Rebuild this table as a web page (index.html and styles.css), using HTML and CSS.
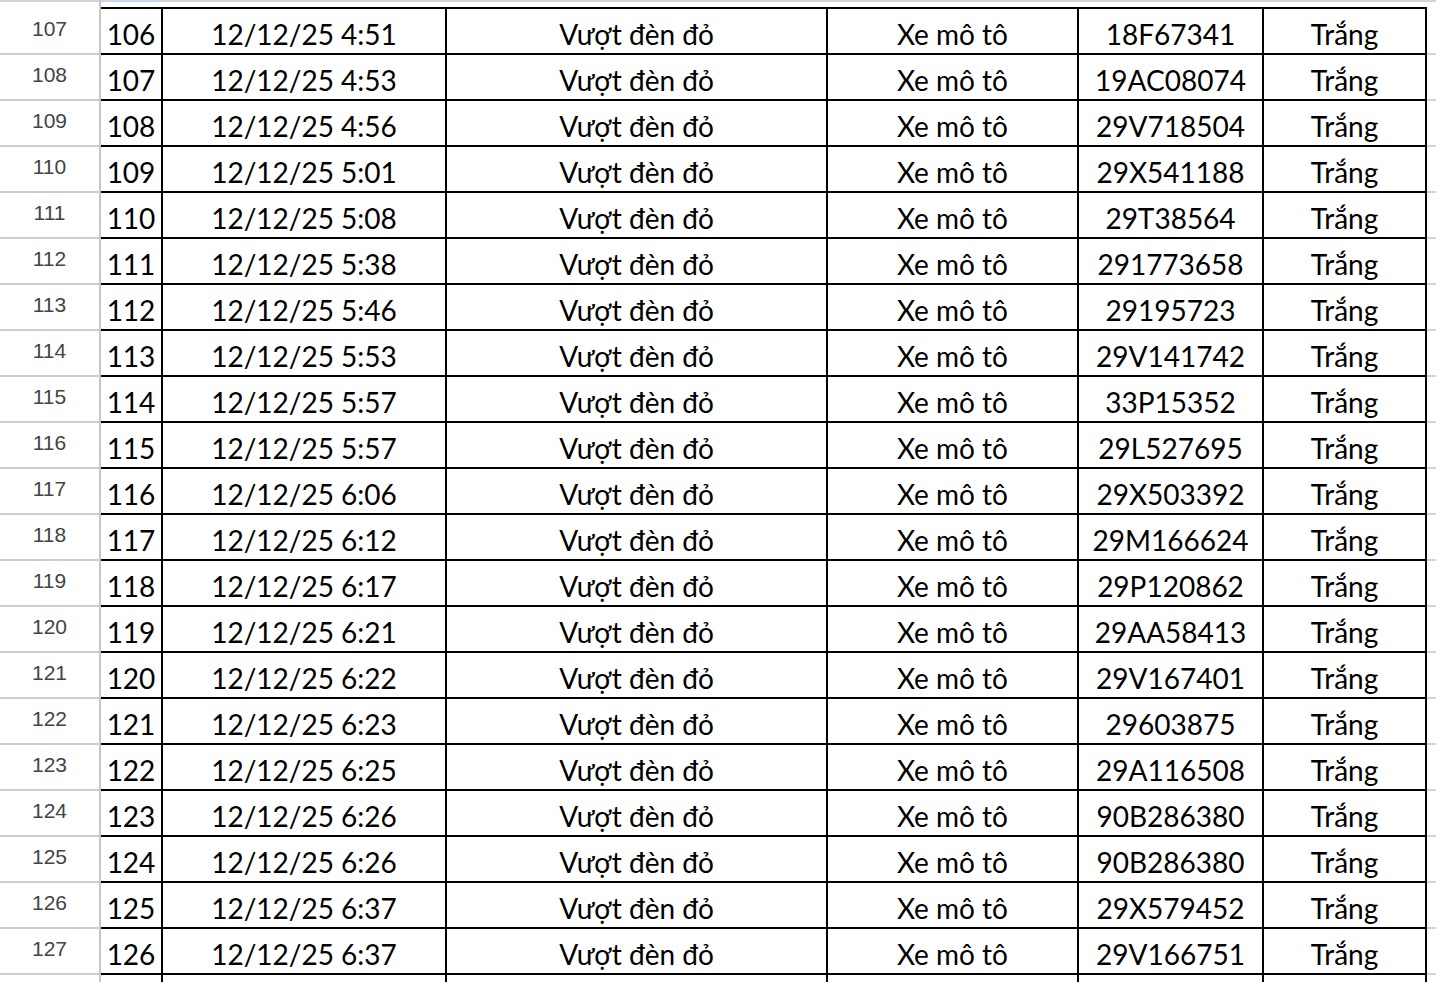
FILE: index.html
```html
<!DOCTYPE html>
<html lang="vi">
<head>
<meta charset="utf-8">
<title>Sheet</title>
<link rel="stylesheet" href="styles.css">
</head>
<body>
<div class="page">
  <div class="rowheads" id="rowheads">
    <div class="rh-top"></div>
    <div class="rh-gap"></div>
  </div>
  <div class="vsep"></div>
  <div class="sheet">
    <div class="sh-top"><div class="sel"></div><div class="rest"></div></div>
    <div class="sh-gap"></div>
    <div class="topline"><div class="blk"></div></div>
    <div class="rows" id="rows"></div>
  </div>
</div>
<script>
const data = [
["106","12/12/25 4:51","18F67341"],
["107","12/12/25 4:53","19AC08074"],
["108","12/12/25 4:56","29V718504"],
["109","12/12/25 5:01","29X541188"],
["110","12/12/25 5:08","29T38564"],
["111","12/12/25 5:38","291773658"],
["112","12/12/25 5:46","29195723"],
["113","12/12/25 5:53","29V141742"],
["114","12/12/25 5:57","33P15352"],
["115","12/12/25 5:57","29L527695"],
["116","12/12/25 6:06","29X503392"],
["117","12/12/25 6:12","29M166624"],
["118","12/12/25 6:17","29P120862"],
["119","12/12/25 6:21","29AA58413"],
["120","12/12/25 6:22","29V167401"],
["121","12/12/25 6:23","29603875"],
["122","12/12/25 6:25","29A116508"],
["123","12/12/25 6:26","90B286380"],
["124","12/12/25 6:26","90B286380"],
["125","12/12/25 6:37","29X579452"],
["126","12/12/25 6:37","29V166751"]
];
const rh = document.getElementById('rowheads');
const rows = document.getElementById('rows');
data.forEach((d, i) => {
  const h = document.createElement('div');
  h.className = 'rh';
  h.textContent = String(107 + i);
  rh.appendChild(h);
  const r = document.createElement('div');
  r.className = 'row';
  const vals = [d[0], d[1], 'Vượt đèn đỏ', 'Xe mô tô', d[2], 'Trắng'];
  vals.forEach(v => {
    const c = document.createElement('div');
    c.className = 'c';
    c.textContent = v;
    r.appendChild(c);
  });
  const f = document.createElement('div');
  f.className = 'fill';
  r.appendChild(f);
  rows.appendChild(r);
});
const h = document.createElement('div');
h.className = 'rh';
rh.appendChild(h);
const r = document.createElement('div');
r.className = 'row';
for (let k = 0; k < 6; k++) { const c = document.createElement('div'); c.className = 'c'; r.appendChild(c); }
const f = document.createElement('div'); f.className = 'fill'; r.appendChild(f);
rows.appendChild(r);
</script>
</body>
</html>
```

FILE: styles.css
```css
html, body {
  margin: 0;
  padding: 0;
  background: #fff;
}
body {
  width: 1436px;
  height: 982px;
  overflow: hidden;
}
.page {
  display: flex;
  height: 982px;
  overflow: hidden;
}
.rowheads {
  width: 99px;
  flex: none;
  display: flex;
  flex-direction: column;
}
.rh-top {
  height: 2px;
  flex: none;
  background: #d4d4d4;
}
.rh-gap {
  height: 7px;
  flex: none;
}
.rh {
  height: 44px;
  flex: none;
  border-bottom: 2px solid #cdcdcd;
  font-family: "Liberation Sans", Arial, sans-serif;
  font-size: 21px;
  color: #444;
  text-align: center;
  line-height: 39px;
}
.vsep {
  width: 2px;
  flex: none;
  background: #c6c6c6;
}
.sheet {
  flex: 1;
  display: flex;
  flex-direction: column;
}
.sh-top {
  height: 2px;
  flex: none;
  display: flex;
}
.sh-top .sel {
  width: 60px;
  background: #c8d5ec;
}
.sh-top .rest {
  flex: 1;
  background: #d4d4d4;
}
.sh-gap {
  height: 5px;
  flex: none;
}
.topline {
  display: flex;
  height: 2px;
  flex: none;
}
.topline .blk {
  width: 1326px;
  background: #000;
}
.rows {
  display: flex;
  flex-direction: column;
  flex: none;
}
.row {
  display: grid;
  grid-template-columns: 62px 284px 381px 251px 185px 163px 1fr;
  height: 46px;
  flex: none;
}
.c {
  box-sizing: border-box;
  border-right: 2px solid #000;
  border-bottom: 2px solid #000;
  display: flex;
  align-items: flex-end;
  justify-content: center;
  padding-bottom: 5px;
  font-family: Lato, "Open Sans", sans-serif;
  font-size: 28px;
  line-height: 28px;
  color: #000;
  white-space: nowrap;
}
.fill {
  border-bottom: 2px solid #d4d4d4;
}
```
